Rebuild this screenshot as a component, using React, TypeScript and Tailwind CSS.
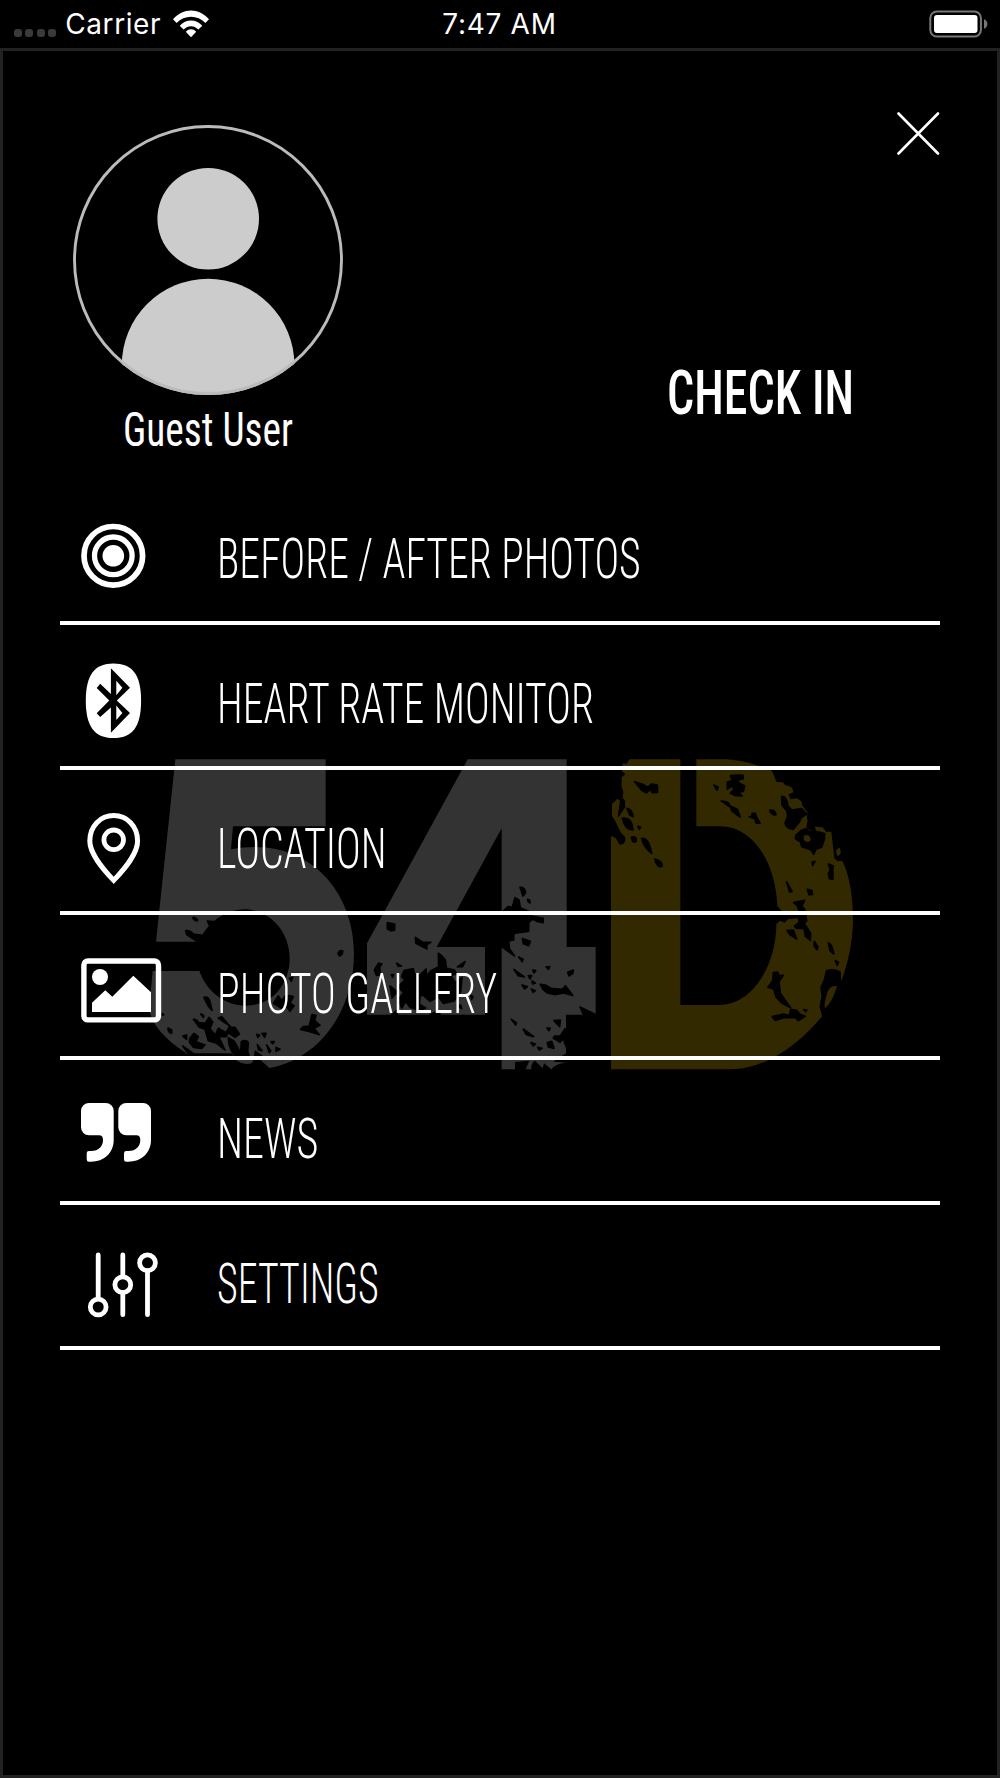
import { useLayoutEffect, useRef, useState } from "react";
import type { ReactNode } from "react";

type FitTextProps = {
  children: string;
  width: number;
  className?: string;
};

// Squeezes a line of text horizontally so that it fills the given width
const FitText: React.FC<FitTextProps> = ({ children, width, className }) => {
  const ref = useRef<HTMLSpanElement>(null);
  const [scale, setScale] = useState(0.65);

  useLayoutEffect(() => {
    if (ref.current) setScale(width / ref.current.offsetWidth);
  }, [width, children]);

  return (
    <span className="block" style={{ width }}>
      <span
        ref={ref}
        className={`inline-block origin-left whitespace-nowrap font-['Roboto',sans-serif] [font-stretch:75%] ${className}`}
        style={{ transform: `scaleX(${scale})` }}
      >
        {children}
      </span>
    </span>
  );
};

const TargetIcon = () => (
  <>
    <circle cx="53.3" cy="75.8" r="29.3" fill="none" stroke="#fff" strokeWidth="5.7" />
    <circle cx="53.3" cy="75.8" r="18.8" fill="none" stroke="#fff" strokeWidth="5.3" />
    <circle cx="53.3" cy="75.8" r="10.8" fill="#fff" />
  </>
);

const BluetoothIcon = () => (
  <>
    <path
      fill="#fff"
      d="M53.4 38.4C72 38.4 81.1 49 81.1 75.7S72 113 53.4 113 25.8 102 25.8 75.7 34.8 38.4 53.4 38.4Z"
    />
    <path
      fill="#000"
      fillRule="evenodd"
      d="M50.9 43.3 70 62.7 56.8 75.5 70 88 50.9 107.7V82.5L40.2 92 36.7 88.3 49.3 75.5 36.7 63 40.2 58.8 50.9 69ZM56.3 55.7V70.3L62.4 62.7ZM56.3 80.5V95L62.4 88Z"
    />
  </>
);

const PinIcon = () => (
  <>
    <path
      fill="none"
      stroke="#fff"
      strokeWidth="5"
      d="M53.7 110.4C42 98 29.8 83.5 29.8 71 29.8 56 40.5 45.6 53.7 45.6S77.6 56 77.6 71C77.6 83.5 65.4 98 53.7 110.4Z"
    />
    <circle cx="53.7" cy="69.8" r="9.8" fill="none" stroke="#fff" strokeWidth="4.8" />
  </>
);

const PhotoIcon = () => (
  <>
    <rect x="23.9" y="46" width="74.6" height="58.9" rx="4" fill="none" stroke="#fff" strokeWidth="5.4" />
    <circle cx="40" cy="62" r="8" fill="#fff" />
    <path fill="#fff" d="M32 97V87.7L45.3 75.3 52.3 81.7 73.3 60.7 91 77.3V97Z" />
  </>
);

const QuoteIcon = () => (
  <>
    <path
      fill="#fff"
      d="M29 43H45.7A8 8 0 0 1 53.7 51V80C53.7 93 44 101.7 31 101.7H29A2.3 2.3 0 0 1 26.7 99.4V93.3A2.3 2.3 0 0 1 29 91H31C39 91 43 86 43 80 43 77 42 75.3 39 75.3H29A8 8 0 0 1 21 67.3V51A8 8 0 0 1 29 43Z"
    />
    <path
      fill="#fff"
      transform="translate(37.3 0)"
      d="M29 43H45.7A8 8 0 0 1 53.7 51V80C53.7 93 44 101.7 31 101.7H29A2.3 2.3 0 0 1 26.7 99.4V93.3A2.3 2.3 0 0 1 29 91H31C39 91 43 86 43 80 43 77 42 75.3 39 75.3H29A8 8 0 0 1 21 67.3V51A8 8 0 0 1 29 43Z"
    />
  </>
);

const SlidersIcon = () => (
  <g fill="none" stroke="#fff" strokeWidth="4.8" strokeLinecap="round">
    <path d="M38.2 50V93M62.8 50V71M62.8 88V109.7M87.5 66V109.7" />
    <circle cx="38.2" cy="102" r="7.9" />
    <circle cx="62.8" cy="79.7" r="7.9" />
    <circle cx="87.5" cy="57.8" r="7.9" />
  </g>
);

const menu: { label: string; width: number; icon: ReactNode }[] = [
  { label: "BEFORE / AFTER PHOTOS", width: 424, icon: <TargetIcon /> },
  { label: "HEART RATE MONITOR", width: 377, icon: <BluetoothIcon /> },
  { label: "LOCATION", width: 170, icon: <PinIcon /> },
  { label: "PHOTO GALLERY", width: 280, icon: <PhotoIcon /> },
  { label: "NEWS", width: 101, icon: <QuoteIcon /> },
  { label: "SETTINGS", width: 162, icon: <SlidersIcon /> },
];

const StatusBar = () => (
  <header className="grid h-12 grid-cols-3 items-center pl-3.5 pr-3 font-['Inter',sans-serif] text-[28px] leading-none">
    <div className="flex items-center">
      <div className="flex gap-[3.4px] pt-[18px]">
        {[0, 1, 2, 3].map((dot) => (
          <span key={dot} className="size-2 rounded-[3px] bg-[#3a3a3a]" />
        ))}
      </div>
      <span className="ml-[9px] tracking-[0.6px]">Carrier</span>
      <svg className="ml-[11px]" width="38" height="28" viewBox="0 0 38 28">
        <path
          fill="#fff"
          d="M1 9.3C11-2.4 27-2.4 37 9.3L33.4 13C25.5 4.5 12.5 4.5 4.6 13ZM7.7 15.7C14 8.7 24 8.7 30.3 15.7L26.4 19.6C22 15.1 16 15.1 11.6 19.6ZM13.8 21.7C16.8 18.4 21.2 18.4 24.2 21.7L19 27.2Z"
        />
      </svg>
    </div>
    <span className="pr-[3px] text-center tracking-[0.7px]">7:47 AM</span>
    <svg className="justify-self-end" width="60" height="28" viewBox="0 0 60 28">
      <rect x="2.3" y="1.5" width="50.6" height="25" rx="6.5" fill="none" stroke="#777" strokeWidth="2" />
      <rect x="6" y="5" width="43.5" height="18" rx="3" fill="#fff" />
      <path fill="#777" d="M56 9.3C60.5 10.8 60.5 17.2 56 18.7Z" />
    </svg>
  </header>
);

const Avatar = () => (
  <svg width="270" height="271" viewBox="0 0 270 271">
    <clipPath id="avatar">
      <circle cx="135" cy="135" r="135" />
    </clipPath>
    <g clipPath="url(#avatar)" fill="#ccc">
      <circle cx="135.2" cy="93.7" r="50.8" />
      <path d="M48.8 290V240A86.3 86.3 0 0 1 221.4 240V290Z" />
    </g>
    <circle cx="135" cy="135" r="133.5" fill="none" stroke="#bbb" strokeWidth="2.9" />
  </svg>
);

// Distressed 54D logo behind the menu. Each glyph has its own origin.
const Watermark = () => (
  <svg
    className="pointer-events-none absolute left-[137px] top-[689px]"
    width="740"
    height="340"
    viewBox="140 740 740 340"
    strokeLinejoin="round"
  >
    <g transform="translate(140 740) scale(.33333)">
      <path
        fill="#333"
        d="M106 58H557V259H279L273 328C500 285 642 450 642 640C642 820 530 960 388 984L348 948L335 970Q310 976 292 963L275 940H135L153 948C80 905 28 850 28 800L38 693H178C200 755 255 797 318 797C395 797 449 735 449 655C449 575 390 508 313 508C270 510 245 525 222 543L202 545L208 556L185 585L160 590L175 605H48Z"
      />
      <path
        stroke="#000"
        strokeWidth="5"
        d="M158 533Q165 530 173 540Q168 548 158 533ZM137 572Q150 570 160 582L183 585L172 605L140 584ZM202 543L222 545L209 557ZM594 640Q600 628 608 633Q608 645 598 648ZM192 772Q206 769 210 785L216 811Q205 803 192 772ZM84 864L95 870V880Q84 878 84 864ZM65 820L71 824L67 826ZM182 822Q194 825 190 832ZM160 838Q170 836 176 848L196 850L207 832L218 846L210 866L226 885L235 865L258 878L270 857L250 845L235 834L245 830L262 850L270 862H285L298 882L285 892L265 878L258 890L236 890L255 930L230 910L205 902L195 868L178 862ZM150 895L162 880L175 890L168 905L195 915L185 925L160 922L148 906ZM128 888L140 885V898ZM128 918L170 948H150ZM265 893L282 903L292 920L302 940L304 905Q318 898 325 908L323 935L330 955H292Q265 930 265 893ZM350 883L359 885L354 892ZM366 880H378L374 892ZM393 905H403L398 911ZM352 914L366 932L356 930ZM380 915L392 932L388 938ZM408 922L420 928L408 934ZM346 934L370 952H344ZM516 824L528 826L524 842L540 856L522 865L538 884L510 875L482 868L490 860L508 858ZM400 790L415 768L425 782L438 765L460 770L450 790L462 797L450 814L440 800L425 805ZM448 715L458 712L454 724Z"
      />
    </g>

    <g transform="translate(370 740) scale(.33333)">
      <path
        fill="#333"
        d="M293 58H590V621H677V824H588V888L580 905L588 925V940L550 965L590 968Q560 968 544 988L522 970L518 985L495 962Q482 970 484 988H467L478 962L435 966V988H395V265L200 621H345V824H-9V610Z"
      />
      <path
        stroke="#000"
        strokeWidth="5"
        d="M450 442Q464 440 467 458L459 468ZM473 478Q482 480 480 489Q473 487 473 478ZM435 473L447 480L451 503L480 516L486 528L520 535L519 548L500 544L488 537L476 548V574L450 577L431 581V600L416 603L418 626L434 648L395 620V518L414 500L427 502ZM457 596L481 604L476 617L460 611ZM446 651L459 658L457 665ZM432 688L463 711L444 707ZM475 707H485L480 717ZM488 690L497 692L492 699ZM456 735L472 740L464 747ZM486 723L496 729L488 732ZM484 747L496 752L489 757ZM528 681L539 680L536 688ZM593 697L610 690L608 701L597 708ZM511 733L525 735L546 746L578 748L586 737L608 766L580 759L555 764L532 759L518 747ZM630 801L675 823H640ZM424 838L439 848L437 855ZM460 867L491 890L468 883ZM552 842L571 840L569 860ZM531 864H541L537 872ZM483 908L496 912L490 918ZM503 922L516 925L508 930ZM532 908L545 904L552 925L535 921ZM585 866L590 900H575L570 907L561 901L550 895L553 888L571 888ZM52 548L74 552V570L64 573L52 566ZM136 592L157 606L183 607L170 614L171 627L149 616L138 610ZM205 640Q216 645 226 660L229 684L253 690L260 702L243 706L255 728L276 712L272 755L252 783L220 790L205 770L180 784L160 766L150 740L168 710L183 692L206 680ZM262 681L285 665L278 680ZM80 670L94 678L85 679ZM13 690L26 669L36 672L29 680L31 704L19 706ZM64 704H71L68 712ZM102 692L130 686L133 702L150 705L168 687L170 712L155 732L174 750L150 770L148 793L167 804L151 813L120 802L107 784L95 804L85 777L101 758L84 740L105 720L95 710ZM60 738L82 756L66 774ZM302 765L309 770L305 778ZM262 798L272 795L275 806ZM180 824L205 812L210 824ZM66 824L80 812L82 824Z"
      />
    </g>

    <g transform="translate(600 740) scale(.33333)">
      <path
        fill="#332900"
        d="M88 58H241V795H360C460 795 530 670 529 552L540 542L554 548L565 537L592 535L600 520L548 516L532 498C528 370 460 259 360 259H289V58H380Q445 62 515 92Q523 105 529 126L548 127L556 136Q580 138 580 157L566 163L571 178L590 175Q608 182 606 195L622 217L621 238L605 233Q590 240 598 247L583 268Q565 273 554 250L560 225L553 210L543 190Q540 175 552 165L558 172L560 195L580 210L594 215L590 225L612 220L623 240L619 260L628 270L648 274L645 260L668 262L678 275H694L703 355L712 363H727C750 410 759 470 759 540C759 600 745 670 722 728V700Q705 685 678 694L673 720L663 740L668 768L660 800L667 828C600 910 500 988 390 988H33V285L48 292L58 313Q75 315 74 293L60 277L47 245L36 228V192L52 176L62 184L53 228L55 232L73 202L76 184L68 175L70 155L65 140V112L76 103L65 92L68 70L80 72Z"
      />
      {/* worn upper left edge of the stem */}
      <path
        stroke="#000"
        strokeWidth="4"
        d="M30 232L47 252L60 277L74 293Q75 313 60 311L48 292L30 284ZM56 228L62 182L70 178L74 200Z"
      />
      <path
        stroke="#000"
        strokeWidth="5"
        d="M104 125L128 133L143 142L155 132L172 135L173 157L157 158L149 148L139 159L125 151ZM81 205Q96 208 100 230L90 226ZM67 235Q95 230 99 270Q75 270 67 235ZM114 259L122 262L118 268ZM94 291Q112 288 108 305Q96 310 94 291ZM125 296Q145 290 155 340Q134 326 125 296ZM164 357Q187 362 187 378Q172 386 164 357ZM342 135L354 142L351 151ZM391 107L413 105L429 106L430 117L414 119L417 129L434 138L430 154L416 156L426 168L407 167L391 160L403 147L394 138L382 147V126L397 122ZM364 183Q389 184 389 197L412 208L421 231L410 224L395 212L392 202ZM448 230L454 231L457 220H466L471 234L480 250L468 249L465 237ZM509 211Q526 208 528 224Q517 228 509 211ZM545 170Q560 167 564 198L575 210L605 206L620 222L604 233L598 246L580 268Q560 268 555 250L563 228L560 212L546 195ZM587 286L605 270L620 266L627 275L648 274L674 281L673 298L665 322L648 328L641 343L632 329L605 320L602 306L587 297ZM636 367L645 364L638 377ZM685 372L700 378L698 390L699 418L688 416L685 400L691 390ZM560 426L576 454L569 456ZM622 448L636 452L637 463L627 464ZM581 488L614 481L605 499L614 507L620 543L613 550L632 580L631 601L616 588L612 565L590 565L583 559L597 547L596 535L600 520L592 498ZM561 572L580 570L590 597L570 584ZM643 604L654 621L651 629L642 617ZM685 608Q698 614 701 642L690 632ZM706 662L715 667L712 676ZM520 698L533 696L537 707L550 706L537 725L541 760L572 803L545 789L528 771L522 748L504 742L518 722ZM517 830L551 822L568 827L572 808L590 811L600 823L616 829L595 842L585 832L552 833L525 841ZM611 809L620 810L617 815ZM680 692Q700 685 720 696L721 726L712 738L690 742L676 770L674 806L668 826L661 800L667 768L663 742L673 720Z"
      />
      <g fill="#332900">
        <path d="M611 287Q630 280 632 300Q625 312 611 300Z" />
        <path d="M709 330Q722 315 722 338Q716 355 709 342Z" />
        <path d="M711 738Q700 780 676 805Q670 798 680 765Q686 735 711 738Z" />
      </g>
    </g>
  </svg>
);

export default function App() {
  return (
    <div className="flex h-[1778px] w-[1000px] flex-col overflow-hidden bg-black text-white">
      <StatusBar />
      <main className="relative flex-1 border-3 border-[#222]">
        <Watermark />

        <section className="flex h-[429px] justify-between pl-[70px] pr-[57px] pt-[60px]">
          <div className="flex w-[270px] flex-col items-center pt-[14px]">
            <Avatar />
            <FitText width={170} className="text-[47.5px] leading-[68px] font-[450]">
              Guest User
            </FitText>
          </div>
          <div className="flex flex-col items-end">
            <button className="size-[44px]" aria-label="Close">
              <svg width="44" height="44" viewBox="0 0 44 44">
                <path stroke="#fff" strokeWidth="2.6" strokeLinecap="round" d="M2.5 2.5 42 42.5M42 2.5 2.5 42.5" />
              </svg>
            </button>
            <button className="mr-[86px] mt-[202px] text-left">
              <FitText width={187} className="text-[61px] leading-[72px] font-medium">
                CHECK IN
              </FitText>
            </button>
          </div>
        </section>

        <nav className="relative px-[57px]">
          {menu.map(({ label, width, icon }) => (
            <a key={label} className="flex h-[145px] items-center gap-[46.5px] border-b-4 border-white">
              <svg className="shrink-0" width="110" height="141" viewBox="0 0 110 141">
                {icon}
              </svg>
              <FitText width={width} className="pt-[18px] text-[55.5px] leading-[64px] font-[350]">
                {label}
              </FitText>
            </a>
          ))}
        </nav>
      </main>
    </div>
  );
}
